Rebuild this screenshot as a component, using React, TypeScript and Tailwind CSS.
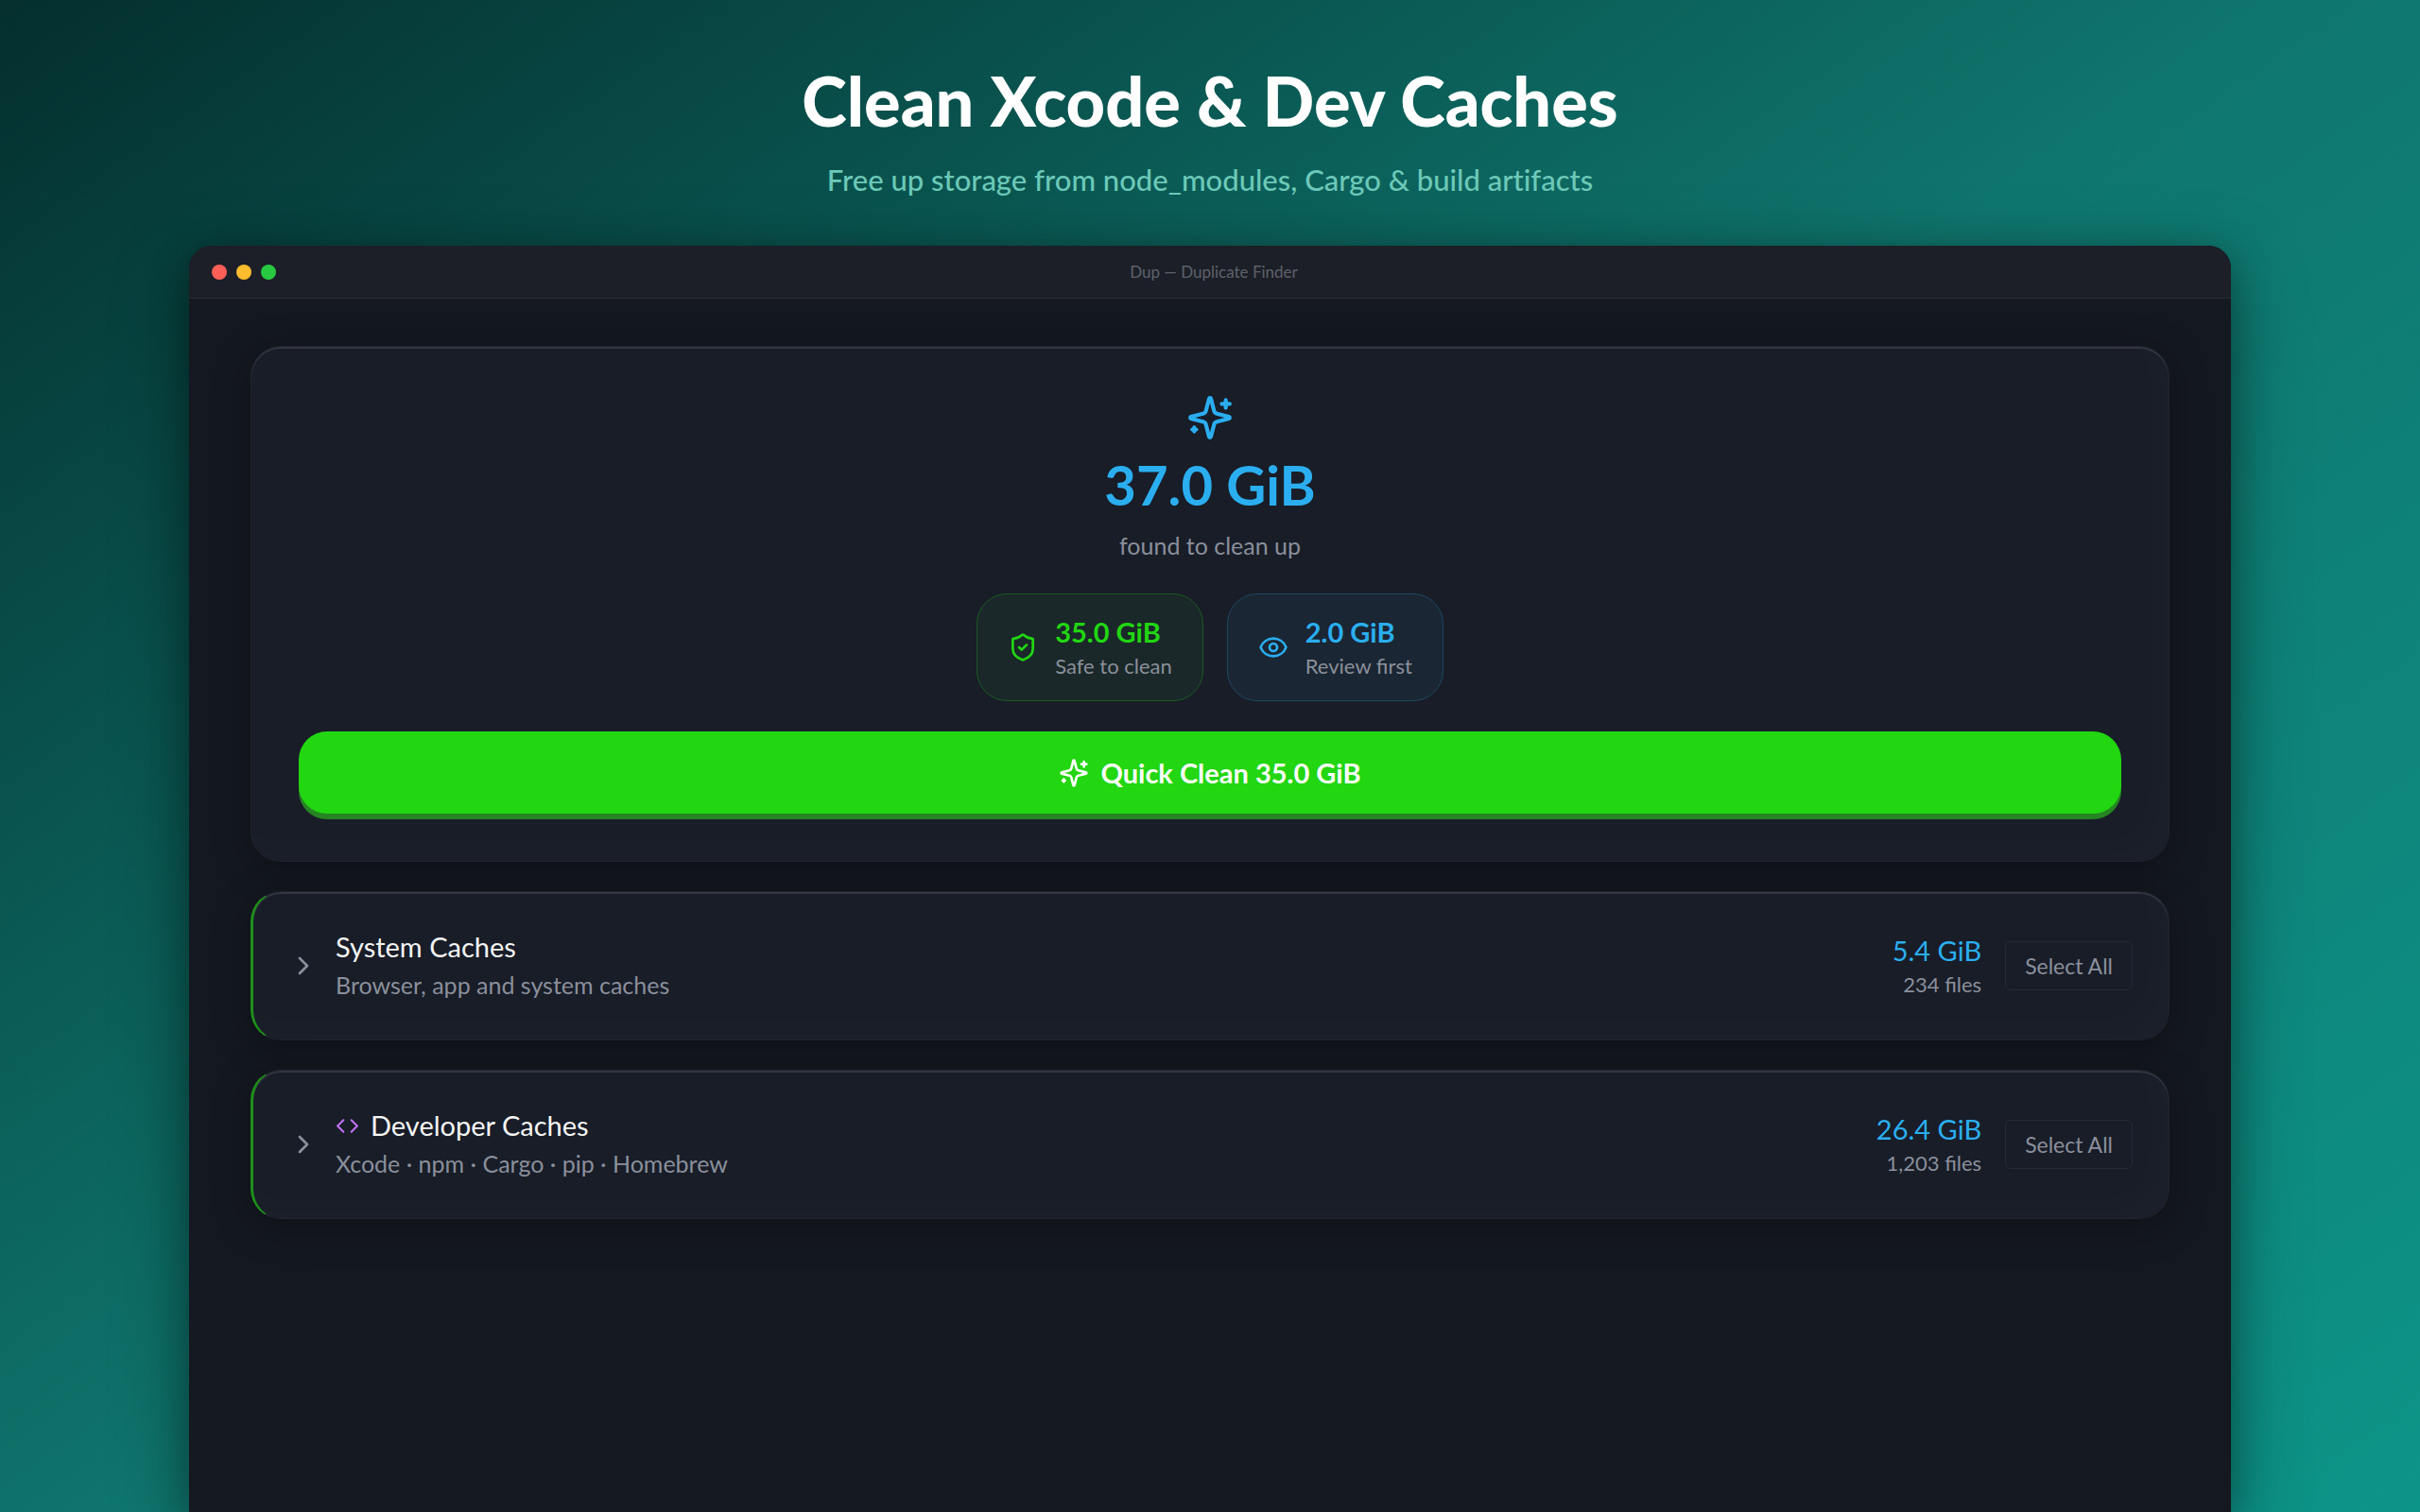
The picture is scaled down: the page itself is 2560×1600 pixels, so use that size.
import type { ReactNode } from "react";
import { ChevronRight, Code, Eye, ShieldCheck } from "lucide-react";

type CacheGroup = {
  title: string;
  description: string;
  size: string;
  files: string;
  icon?: ReactNode;
};

const groups: CacheGroup[] = [
  {
    title: "System Caches",
    description: "Browser, app and system caches",
    size: "5.4 GiB",
    files: "234 files",
  },
  {
    title: "Developer Caches",
    description: "Xcode · npm · Cargo · pip · Homebrew",
    size: "26.4 GiB",
    files: "1,203 files",
    icon: <Code className="size-[25px] text-[#c071f7]" />,
  },
];

function Sparkles({ className }: { className: string }) {
  return (
    <svg
      viewBox="0 0 24 24"
      fill="none"
      stroke="currentColor"
      strokeWidth={2}
      strokeLinecap="round"
      strokeLinejoin="round"
      aria-hidden="true"
      className={className}
    >
      <path d="M9.937 15.5A2 2 0 0 0 8.5 14.063l-6.135-1.582a.5.5 0 0 1 0-.962L8.5 9.936A2 2 0 0 0 9.937 8.5l1.582-6.135a.5.5 0 0 1 .963 0L14.063 8.5A2 2 0 0 0 15.5 9.937l6.135 1.581a.5.5 0 0 1 0 .964L15.5 14.063a2 2 0 0 0-1.437 1.437l-1.582 6.135a.5.5 0 0 1-.963 0z" />
      <path d="M20 3v4" />
      <path d="M22 5h-4" />
      <path d="M4 17v2" />
      <path d="M5 18H3" />
    </svg>
  );
}

function TitleBar() {
  return (
    <div className="flex h-14 items-center border-b border-[#272b35] bg-[#1c1f27] px-6">
      <div className="flex gap-[10px]">
        <span className="size-4 rounded-full bg-[#ff5f57]" />
        <span className="size-4 rounded-full bg-[#febc2e]" />
        <span className="size-4 rounded-full bg-[#28c840]" />
      </div>
      <p className="flex-1 pr-[60px] text-center text-[17px] leading-6 text-[#5d616b]">
        Dup — Duplicate Finder
      </p>
    </div>
  );
}

function Summary() {
  return (
    <section className="flex flex-col items-center rounded-[32px] border border-[#20242f] bg-[#181d28] p-[50px] shadow-[inset_0_2px_0_#313641,inset_-20px_-20px_40px_rgba(255,255,255,0.015),0_8px_40px_rgba(0,0,0,0.3)]">
      <Sparkles className="size-[50px] text-[#2baef0]" />
      <p className="mt-2 text-[58px] leading-[76px] font-bold text-[#2baef0]">
        37.0 GiB
      </p>
      <p className="mt-2 text-[25px] leading-9 text-[#8b8f9b]">
        found to clean up
      </p>
      <div className="mt-[33px] flex gap-[25px]">
        <div className="flex items-center gap-[18px] rounded-[32px] border border-[#1c5a22] bg-[#1a2829] px-8 py-5">
          <ShieldCheck className="size-8 text-[#21d613]" />
          <div>
            <p className="text-[29px] leading-10 font-bold text-[#21d613]">
              35.0 GiB
            </p>
            <p className="text-[22px] leading-8 text-[#8b8f9b]">
              Safe to clean
            </p>
          </div>
        </div>
        <div className="flex items-center gap-[18px] rounded-[32px] border border-[#1e4863] bg-[#1a2633] px-8 py-5">
          <Eye className="size-8 text-[#2baef0]" />
          <div>
            <p className="text-[29px] leading-10 font-bold text-[#2baef0]">
              2.0 GiB
            </p>
            <p className="text-[22px] leading-8 text-[#8b8f9b]">
              Review first
            </p>
          </div>
        </div>
      </div>
      <button
        type="button"
        className="mt-8 flex h-[87px] w-full items-center justify-center gap-3 rounded-[30px] bg-[#22d611] text-[29px] leading-10 font-bold text-white shadow-[0_6px_0_#268522]"
      >
        <Sparkles className="size-8" />
        Quick Clean 35.0 GiB
      </button>
    </section>
  );
}

function GroupRow({ group }: { group: CacheGroup }) {
  return (
    <section className="flex h-[158px] items-center rounded-[32px] border border-l-[3px] border-[#20242f] border-l-[#1f8f1a] bg-[#181d28] pr-[38px] pl-[37px] shadow-[inset_0_2px_0_#313641,inset_-20px_-20px_40px_rgba(255,255,255,0.015),0_8px_40px_rgba(0,0,0,0.3)]">
      <ChevronRight className="size-8 text-[#8b8f9b]" />
      <div className="ml-[18px] flex-1">
        <div className="flex items-center gap-3">
          {group.icon}
          <h2 className="text-[29px] leading-10 text-[#f5f5f4]">
            {group.title}
          </h2>
        </div>
        <p className="text-[25px] leading-10 text-[#8b8f9b]">
          {group.description}
        </p>
      </div>
      <div className="mr-[25px] text-right">
        <p className="text-[29px] leading-10 text-[#2baef0]">{group.size}</p>
        <p className="text-[22px] leading-8 text-[#8b8f9b]">{group.files}</p>
      </div>
      <button
        type="button"
        aria-label={`Select All, ${group.title}`}
        className="h-[52px] rounded-md border border-[#262a33] px-5 text-[23px] leading-8 text-[#8b8f9b]"
      >
        Select All
      </button>
    </section>
  );
}

export default function App() {
  return (
    <div className="flex min-h-screen flex-col bg-[linear-gradient(145deg,#042f2e_0%,#0f766e_50%,#0d9488_100%)] font-[Lato,sans-serif]">
      <header className="pt-[58px] pb-[50px] text-center">
        <h1 className="text-[72px] leading-[96px] font-black text-white">
          Clean Xcode &amp; Dev Caches
        </h1>
        <p className="mt-4 text-[31px] leading-10 font-medium text-[#6cc9b8] [font-variant-ligatures:none]">
          Free up storage from node_modules, Cargo &amp; build artifacts
        </p>
      </header>
      <main className="mx-[200px] flex-1 overflow-hidden rounded-t-[24px] bg-[#141820] shadow-[0_24px_80px_rgba(0,0,0,0.35),0_8px_40px_rgba(0,0,0,0.25)]">
        <TitleBar />
        <div className="flex flex-col gap-[31px] px-[65px] py-[50px]">
          <Summary />
          {groups.map((group) => (
            <GroupRow key={group.title} group={group} />
          ))}
        </div>
      </main>
    </div>
  );
}
